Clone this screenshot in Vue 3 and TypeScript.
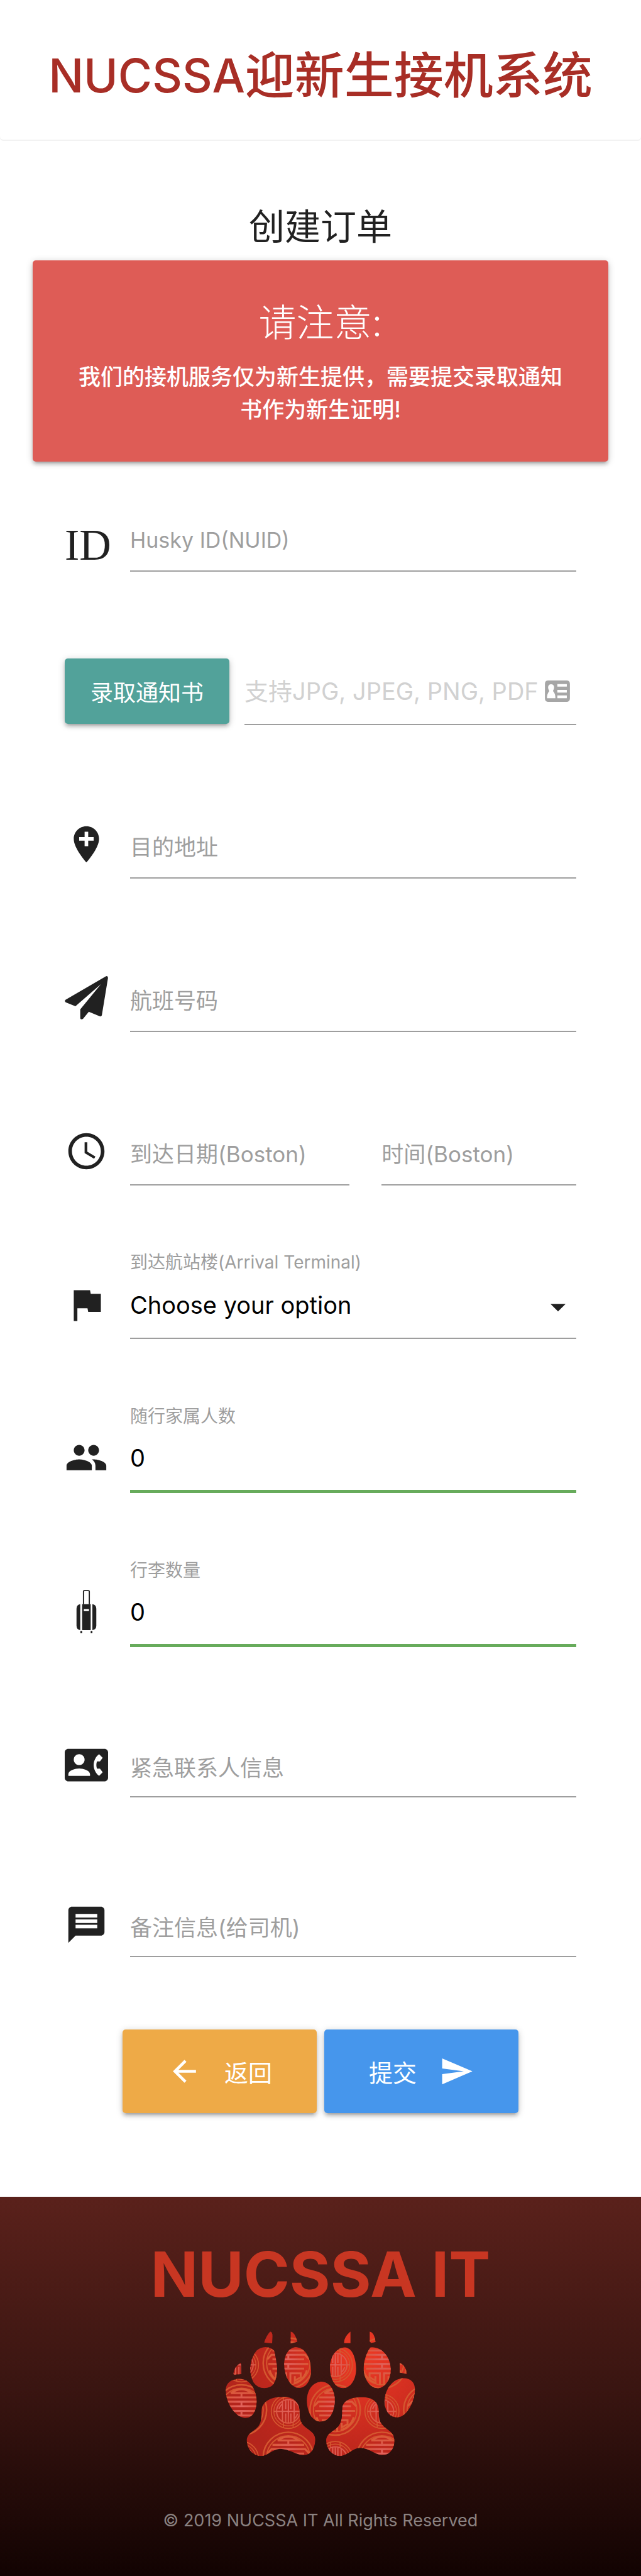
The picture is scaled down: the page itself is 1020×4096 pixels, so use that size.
<script setup lang="ts">
import { ref } from 'vue'

const nuid = ref('')
const fileName = ref('')
const address = ref('')
const flight = ref('')
const date = ref('')
const time = ref('')
const terminal = ref('')
const companions = ref(0)
const luggage = ref(0)
const contact = ref('')
const note = ref('')

const picker = ref<HTMLInputElement | null>(null)
const terminals: string[] = ['Terminal A', 'Terminal B', 'Terminal C', 'Terminal E']

function pickFile(): void {
  picker.value?.click()
}

function onFile(event: Event): void {
  const input = event.target as HTMLInputElement
  fileName.value = input.files?.[0]?.name ?? ''
}

/* Medallion centres of the brocade printed on the paws */
const largeMedallions: [number, number][] = [[152, 530], [696, 530], [1240, 530], [424, 258], [968, 258], [424, 805], [968, 805]]
const smallMedallions: [number, number][] = [[152, 268], [697, 268], [424, 538], [968, 538], [152, 812], [697, 812]]
</script>

<template>
  <div class="page">
    <header class="site-header">
      <h1><span class="org">NUCSSA</span><span>迎新生接机系统</span></h1>
    </header>

    <main>
      <h2>创建订单</h2>

      <section class="notice">
        <h3>请注意:</h3>
        <p>我们的接机服务仅为新生提供，需要提交录取通知书作为新生证明!</p>
      </section>

      <form @submit.prevent>
        <div class="row row-first">
          <span class="icon icon-id" aria-hidden="true">ID</span>
          <div class="control">
            <label class="latin" for="nuid">Husky ID(NUID)</label>
            <input id="nuid" v-model="nuid" type="text" />
          </div>
        </div>

        <div class="row row-file">
          <button class="btn btn-file" type="button" @click="pickFile">录取通知书</button>
          <input ref="picker" type="file" hidden aria-label="录取通知书" @change="onFile" />
          <div class="file-path">
            <input :value="fileName" type="text" readonly aria-label="录取通知书" placeholder="支持JPG, JPEG, PNG, PDF" />
            <svg viewBox="0 0 145 124" aria-hidden="true">
              <path fill="#a6a6a6" fill-rule="evenodd" d="M20 0H125Q145 0 145 20V104Q145 124 125 124H20Q0 124 0 104V20Q0 0 20 0ZM72 21V36H127V21ZM72 55V70H127V55ZM72 87V103H127V87ZM36 22C14 22 16 48 25 59C26 68 12 68 12 103H61C61 68 47 68 47 59C56 48 58 22 36 22Z" />
            </svg>
          </div>
        </div>

        <div class="row">
          <svg class="icon" viewBox="0 0 24 24" aria-hidden="true"><path d="M12 2C8.14 2 5 5.14 5 9c0 5.25 7 13 7 13s7-7.75 7-13c0-3.86-3.14-7-7-7zm4 8h-3v3h-2v-3H8V8h3V5h2v3h3v2z" /></svg>
          <div class="control">
            <label for="address">目的地址</label>
            <input id="address" v-model="address" type="text" />
          </div>
        </div>

        <div class="row">
          <svg class="icon" viewBox="75 927 252 253" aria-hidden="true"><path d="M314 929Q326 923 327 938L291 1156Q287 1164 279 1162L215 1135L182 1175Q176 1181 168 1178Q165 1175 165 1168V1121L286 974L137 1103L80 1080Q71 1072 79 1065Z" /></svg>
          <div class="control">
            <label for="flight">航班号码</label>
            <input id="flight" v-model="flight" type="text" />
          </div>
        </div>

        <div class="row">
          <svg class="icon" viewBox="0 0 24 24" aria-hidden="true"><path d="M11.99 2C6.47 2 2 6.48 2 12s4.47 10 9.99 10C17.52 22 22 17.52 22 12S17.52 2 11.99 2zM12 20c-4.42 0-8-3.58-8-8s3.58-8 8-8 8 3.58 8 8-3.58 8-8 8zm.5-13H11v6l5.25 3.15.75-1.23-4.5-2.67z" /></svg>
          <div class="pair">
            <div class="control">
              <label for="date">到达日期(Boston)</label>
              <input id="date" v-model="date" type="text" />
            </div>
            <div class="control">
              <label for="time">时间(Boston)</label>
              <input id="time" v-model="time" type="text" />
            </div>
          </div>
        </div>

        <div class="row">
          <svg class="icon" viewBox="0 0 24 24" aria-hidden="true"><path d="M14.4 6L14 4H5v17h2v-7h5.6l.4 2h7V6z" /></svg>
          <div class="control filled">
            <label for="terminal">到达航站楼(Arrival Terminal)</label>
            <select id="terminal" v-model="terminal">
              <option value="" disabled>Choose your option</option>
              <option v-for="t in terminals" :key="t" :value="t">{{ t }}</option>
            </select>
            <svg class="caret" viewBox="0 0 24 24" aria-hidden="true"><path d="M7 10l5 5 5-5z" /></svg>
          </div>
        </div>

        <div class="row row-valid">
          <svg class="icon" viewBox="0 0 24 24" aria-hidden="true"><path d="M16 11c1.66 0 2.99-1.34 2.99-3S17.66 5 16 5c-1.66 0-3 1.34-3 3s1.34 3 3 3zm-8 0c1.66 0 2.99-1.34 2.99-3S9.66 5 8 5C6.34 5 5 6.34 5 8s1.34 3 3 3zm0 2c-2.33 0-7 1.17-7 3.5V19h14v-2.5c0-2.33-4.67-3.5-7-3.5zm8 0c-.29 0-.62.02-.97.05 1.16.84 1.97 1.97 1.97 3.45V19h6v-2.5c0-2.33-4.67-3.5-7-3.5z" /></svg>
          <div class="control filled">
            <label for="companions">随行家属人数</label>
            <input id="companions" v-model="companions" type="number" min="0" />
          </div>
        </div>

        <div class="row row-valid">
          <svg class="icon" viewBox="74 230 254 254" aria-hidden="true">
            <path fill="none" stroke="#212121" stroke-width="7" d="M184 314V239Q184 234 190 234H212Q218 234 218 239V314" />
            <path fill-rule="evenodd" d="M165 314V466Q143 462 143 440V340Q143 318 165 314ZM236 314V466Q259 462 259 440V340Q259 318 236 314ZM176 314H226V466H176ZM186 342V354H216V342ZM166 470H176V484H166ZM226 470H236V484H226Z" />
          </svg>
          <div class="control filled">
            <label for="luggage">行李数量</label>
            <input id="luggage" v-model="luggage" type="number" min="0" />
          </div>
        </div>

        <div class="row row-area row-contact">
          <svg class="icon" viewBox="0 0 24 24" aria-hidden="true"><path d="M22 3H2C.9 3 0 3.9 0 5v14c0 1.1.9 2 2 2h20c1.1 0 1.99-.9 1.99-2L24 5c0-1.1-.9-2-2-2zM8 6c1.66 0 3 1.34 3 3s-1.34 3-3 3-3-1.34-3-3 1.34-3 3-3zm6 12H2v-1c0-2 4-3.1 6-3.1s6 1.1 6 3.1v1zm3.85-4h1.64L21 16l-1.99 1.99c-1.31-.98-2.28-2.38-2.73-3.99-.18-.64-.28-1.31-.28-2s.1-1.36.28-2c.45-1.62 1.42-3.01 2.73-3.99L21 8l-1.51 2h-1.64c-.22.63-.35 1.3-.35 2s.13 1.37.35 2z" /></svg>
          <div class="control">
            <label for="contact">紧急联系人信息</label>
            <textarea id="contact" v-model="contact" rows="1"></textarea>
          </div>
        </div>

        <div class="row row-area row-note">
          <svg class="icon" viewBox="0 0 24 24" aria-hidden="true"><path d="M20 2H4c-1.1 0-1.99.9-1.99 2L2 22l4-4h14c1.1 0 2-.9 2-2V4c0-1.1-.9-2-2-2zm-2 12H6v-2h12v2zm0-3H6V9h12v2zm0-3H6V6h12v2z" /></svg>
          <div class="control">
            <label for="note">备注信息(给司机)</label>
            <textarea id="note" v-model="note" rows="1"></textarea>
          </div>
        </div>

        <div class="actions">
          <button class="btn btn-large btn-back" type="button">
            <svg viewBox="0 0 24 24" aria-hidden="true"><path d="M20 11H7.83l5.59-5.59L12 4l-8 8 8 8 1.41-1.41L7.83 13H20v-2z" /></svg>
            返回
          </button>
          <button class="btn btn-large btn-submit" type="submit">
            提交
            <svg viewBox="0 0 24 24" aria-hidden="true"><path d="M2.01 21L23 12 2.01 3 2 10l15 2-15 2z" /></svg>
          </button>
        </div>
      </form>
    </main>

    <footer>
      <p class="brand">NUCSSA IT</p>
      <svg class="paws" viewBox="60 70 1102 730" role="img" aria-label="NUCSSA IT">
        <defs>
          <radialGradient id="paw-red" gradientUnits="userSpaceOnUse" cx="850" cy="200" r="760">
            <stop offset="0" stop-color="#ef3a24" />
            <stop offset="0.3" stop-color="#dc3222" />
            <stop offset="0.7" stop-color="#c1281d" />
            <stop offset="1" stop-color="#b4251c" />
          </radialGradient>
          <radialGradient id="thread" gradientUnits="userSpaceOnUse" cx="0" cy="-15" r="125">
            <stop offset="0" stop-color="#e2655f" />
            <stop offset="0.45" stop-color="#dc5a4d" />
            <stop offset="1" stop-color="#da5a33" />
          </radialGradient>
          <clipPath id="paw-shape">
            <path d="M319 75Q333 78 332 105L330 143Q308 141 284 138Q296 100 319 75Z" />
            <path d="M438 75Q462 80 477 134L438 144Z" />
            <path d="M785 75V142H748Q746 108 785 75Z" />
            <path d="M897 75Q925 82 931 135L905 141L897 132Z" />
            <path d="M146 256Q152 262 151 322L107 325Q100 290 146 256Z" />
            <path d="M1071 256Q1108 272 1112 321L1071 313Z" />
            <path d="M292 165Q325 167 342 187Q352 225 359 285Q360 345 338 380Q320 402 285 403Q245 403 222 370Q202 330 203 285Q207 225 240 185Q262 166 292 165Z" />
            <path d="M470 166C525 170 555 230 556 300C556 355 530 401 488 402C440 402 402 340 400 265C402 205 430 166 470 166Z" />
            <path d="M753 167C795 170 816 225 818 290C818 350 790 402 742 403C695 402 667 350 666 285C667 215 705 169 753 167Z" />
            <path d="M900 168C960 158 1018 215 1019 295C1019 355 985 402 942 403C895 402 862 345 862 290C863 245 875 205 900 168Z" />
            <path d="M142 349C200 350 238 410 240 475C240 540 215 577 172 576C115 572 62 490 60 415C62 370 95 350 142 349Z" />
            <path d="M1090 346C1135 345 1160 370 1160 415C1155 490 1110 573 1055 573C1010 572 983 530 983 480C985 410 1030 350 1090 346Z" />
            <path d="M617 366C665 368 693 415 694 470C694 540 665 597 612 597C565 597 533 545 532 475C532 415 565 367 617 366Z" />
            <path d="M385 454C450 450 490 485 489 540C488 590 500 612 530 635C565 660 583 675 580 710C577 760 550 795 510 792C465 788 430 755 375 755C330 758 305 797 265 797C220 797 183 755 183 705C185 665 225 655 250 625C275 590 265 560 269 530C275 480 320 455 385 454Z" />
            <path d="M845 456C905 453 950 480 949 535C950 590 955 605 990 635C1025 660 1041 675 1040 715C1037 765 1005 794 965 791C925 787 890 750 840 750C800 750 765 797 725 797C680 797 644 755 644 705C646 665 690 655 715 625C740 590 735 560 738 520C740 480 780 457 845 456Z" />
          </clipPath>
        </defs>
        <g clip-path="url(#paw-shape)">
          <rect x="60" y="70" width="1102" height="730" fill="url(#paw-red)" />
          <g v-for="([x, y], i) in largeMedallions" :key="'l' + i" :transform="`translate(${x} ${y})`" fill="none">
            <g stroke="#d4572f" stroke-width="9">
              <circle r="146" />
              <circle r="126" stroke-width="7" />
            </g>
            <g stroke="url(#thread)" stroke-width="11">
              <path d="M-62 -98H62Q0 -142 -62 -98M-92 -73H92M-122 -22L-98 -48H98L122 -22M-92 -22H92M-116 5H116M-92 32H92M0 -98V-73M0 -48V-22M0 5V32" />
              <path d="M-12 128V59H-72V82L-38 102V76M12 128V59H72V82L38 102V76M-108 42Q-92 98 -32 118M108 42Q92 98 32 118" />
            </g>
          </g>
          <g v-for="([x, y], i) in smallMedallions" :key="'s' + i" :transform="`translate(${x} ${y})`" fill="none">
            <g stroke="#d4572f" stroke-width="6">
              <circle r="99" />
              <circle r="84" stroke-width="5" />
              <path d="M-28 -96V-64M28 -96V-64M-28 96V64M28 96V64" />
            </g>
            <g stroke="url(#thread)" stroke-width="7">
              <circle r="68" />
              <path d="M-84 0H84M-34 -58V58M-15 -64V-12M-15 64V12M0 -66V66M15 -64V-12M15 64V12M34 -58V58M-54 -14Q-48 -34 -34 -44M54 14Q48 34 34 44" />
            </g>
          </g>
        </g>
      </svg>
      <p class="copyright">© 2019 NUCSSA IT All Rights Reserved</p>
    </footer>
  </div>
</template>

<style>
body {
  margin: 0;
  background: #fff;
}
</style>

<style scoped>
.page {
  font-family: Inter, "Noto Sans CJK SC", sans-serif;
  color: #212121;
}

.page * {
  box-sizing: border-box;
}

h1,
h2,
h3,
p {
  margin: 0;
  font-weight: 400;
  text-align: center;
}

.site-header {
  padding: 70px 24px 52px;
  border-radius: 0 0 5px 5px;
  box-shadow: 0 2px 0 #f2f2f2;
}

h1 {
  display: flex;
  justify-content: center;
  color: #a82e26;
  font-size: 79px;
  font-weight: 500;
  line-height: 100px;
}

.org {
  font-size: 74px;
}

h2 {
  padding: 99px 0 13px;
  font-size: 57px;
  line-height: 80px;
}

.notice {
  margin: 0 52px;
  padding: 59px 59px 57px;
  border-radius: 5px;
  background: #de5c56;
  color: #fff;
  box-shadow: 0 5px 5px rgba(0, 0, 0, 0.14), 0 7px 2px -5px rgba(0, 0, 0, 0.12), 0 2px 12px rgba(0, 0, 0, 0.2);
}

h3 {
  margin-bottom: 20px;
  font-size: 60px;
  font-weight: 300;
  line-height: 80px;
}

.notice p {
  font-size: 35px;
  font-weight: 500;
  line-height: 52px;
}

form {
  padding: 0 103px;
}

.row {
  display: grid;
  grid-template-columns: 104px minmax(0, 1fr);
  align-items: end;
  min-height: 244px;
}

.row-first {
  min-height: 175px;
}

.row-file {
  grid-template-columns: 262px minmax(0, 1fr);
  column-gap: 24px;
}

.row-valid {
  min-height: 245px;
}

.row-contact {
  min-height: 239px;
}

.row-note {
  min-height: 254px;
}

.icon {
  width: 69px;
  height: 69px;
  margin-bottom: 20px;
  fill: #212121;
}

.row-valid .icon {
  margin-bottom: 22px;
}

.row-area .icon {
  margin-bottom: 17px;
}

.icon-id {
  margin-bottom: 8px;
  font-family: "Liberation Serif", serif;
  font-size: 70px;
  line-height: 69px;
}

.control {
  display: grid;
  align-items: end;
}

.control > * {
  grid-area: 1 / 1;
}

label {
  color: #9e9e9e;
  font-size: 35px;
  line-height: 100px;
  pointer-events: none;
}

label.latin {
  font-size: 34px;
}

.row-area label {
  line-height: 93px;
}

.control.filled label {
  align-self: start;
  font-size: 28px;
  line-height: 32px;
}

input,
select,
textarea {
  display: block;
  width: 100%;
  height: 104px;
  margin: 0;
  padding: 0;
  border: 0;
  border-bottom: 2px solid #9e9e9e;
  border-radius: 0;
  outline: 0;
  background: transparent;
  color: #000;
  font: inherit;
  font-size: 38px;
  resize: none;
  appearance: none;
}

input[hidden] {
  display: none;
}

select {
  height: 107px;
  margin-top: 31px;
}

.row-valid input {
  height: 107px;
  margin-top: 31px;
  border-bottom: 5px solid #67ab5b;
  appearance: textfield;
}

.caret {
  justify-self: end;
  width: 58px;
  height: 58px;
  margin-bottom: 22px;
  fill: #212121;
  pointer-events: none;
}

.pair {
  display: grid;
  grid-template-columns: 53fr 47fr;
  gap: 51px;
}

.file-path {
  display: flex;
  align-items: center;
  padding-right: 10px;
  border-bottom: 2px solid #9e9e9e;
}

.file-path input {
  flex: 1;
  min-width: 0;
  border: 0;
}

.file-path input::placeholder {
  color: #d1d1d1;
  opacity: 1;
}

.file-path svg {
  flex: none;
  width: 40px;
  height: 34px;
}

.btn {
  border: 0;
  border-radius: 5px;
  color: #fff;
  font-family: inherit;
  box-shadow: 0 5px 5px rgba(0, 0, 0, 0.14), 0 7px 2px -5px rgba(0, 0, 0, 0.12), 0 2px 12px rgba(0, 0, 0, 0.2);
  cursor: pointer;
}

.btn-file {
  height: 104px;
  margin-bottom: 2px;
  padding: 0;
  background: #52a29a;
  font-size: 36px;
}

.actions {
  display: flex;
  justify-content: center;
  gap: 12px;
  padding: 115px 0 133px;
}

.btn-large {
  display: flex;
  align-items: center;
  gap: 36px;
  height: 133px;
  padding: 0 71px;
  font-size: 38px;
}

.btn-large svg {
  width: 55px;
  height: 55px;
  fill: #fff;
}

.btn-back {
  background: #eeaa47;
}

.btn-submit {
  background: #4696ec;
}

footer {
  display: flex;
  flex-direction: column;
  align-items: center;
  padding: 63px 24px 68px;
  background: linear-gradient(#5a211b, #3a1511 50%, #120302);
}

.brand {
  color: #c83622;
  font-size: 99px;
  font-weight: 700;
  line-height: 120px;
}

.paws {
  width: 302px;
  height: 200px;
  margin: 30px 0 82px;
}

.copyright {
  color: #8b8281;
  font-size: 27px;
  line-height: 40px;
}
</style>
